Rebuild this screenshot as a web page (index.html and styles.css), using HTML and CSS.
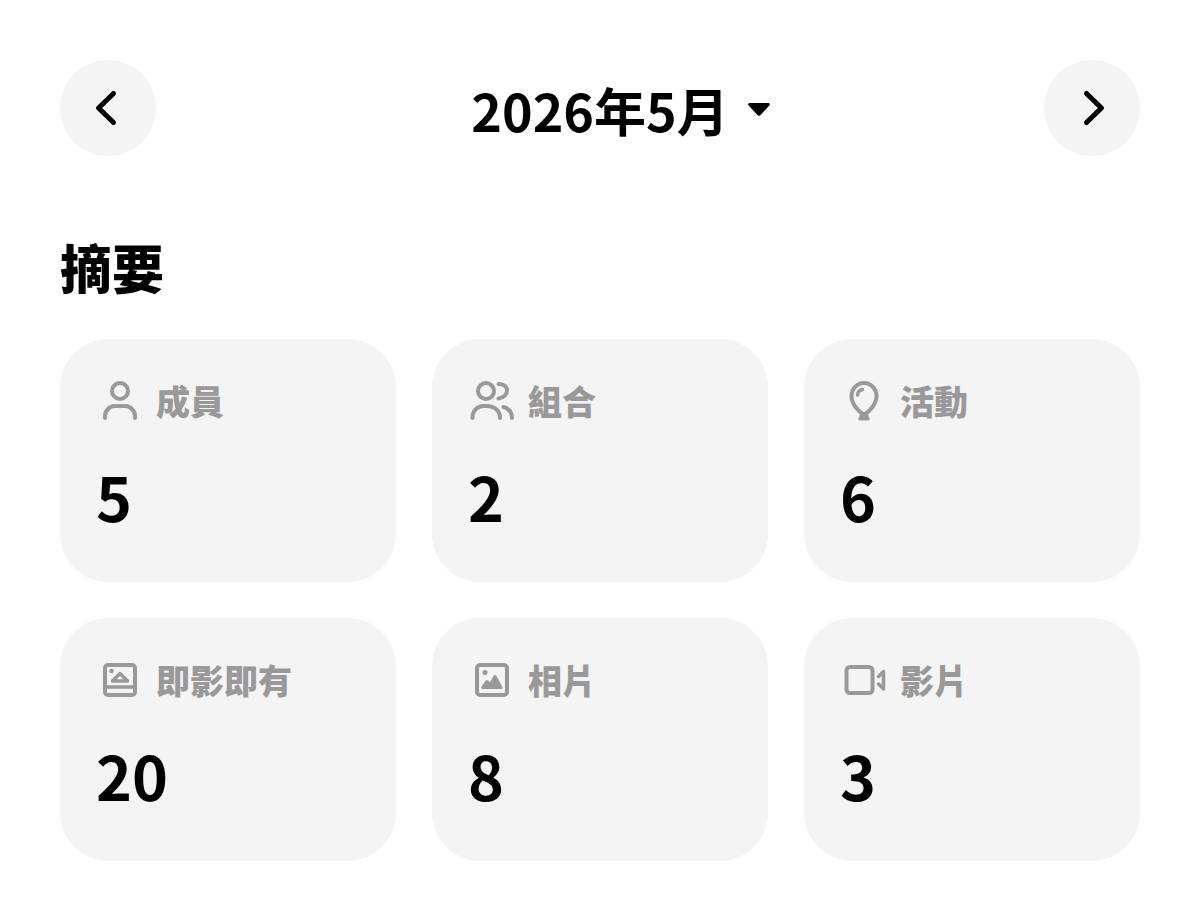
FILE: index.html
```html
<!DOCTYPE html>
<html lang="zh-Hant">
<head>
<meta charset="utf-8">
<meta name="viewport" content="width=device-width, initial-scale=1">
<title>摘要</title>
<link rel="stylesheet" href="styles.css">
</head>
<body>
<main class="page">
  <header class="month-bar">
    <button class="round-button" type="button" aria-label="上個月">
      <svg class="icon" viewBox="0 0 48 48" aria-hidden="true"><path d="M29.500 9.500 14.500 24l15 14.500" class="chevron"/></svg>
    </button>
    <button class="month-picker" type="button">
      <span>2026年5月</span>
      <svg class="caret" viewBox="0 0 24 16" aria-hidden="true"><path d="M2.500 1h19q2.300.5.8 2.500l-8.400 9.300q-1.900 1.900-3.800 0L1.700 3.500Q.2 1.500 2.500 1Z"/></svg>
    </button>
    <button class="round-button" type="button" aria-label="下個月">
      <svg class="icon" viewBox="0 0 48 48" aria-hidden="true"><path d="M18.500 9.500 33.500 24l-15 14.500" class="chevron"/></svg>
    </button>
  </header>

  <section class="summary">
    <h1 class="heading">摘要</h1>
    <dl class="cards">
      <div class="card">
        <dt class="label">
          <svg class="icon" viewBox="0 0 48 48" aria-hidden="true"><circle cx="24" cy="14" r="8"/><path d="M9 41v-1.500c0-6 4.500-10.500 10-10.500h10c5.500 0 10 4.500 10 10.500v1.500"/></svg>
          成員
        </dt>
        <dd class="value">5</dd>
      </div>
      <div class="card">
        <dt class="label">
          <svg class="icon" viewBox="0 0 48 48" aria-hidden="true"><circle cx="18" cy="14" r="8"/><path d="M4.500 41v-.5C4.500 33.500 9.500 29 15.500 29h3c8 0 13.500 5 13.500 11.500v.5M30.500 7c5 0 8.500 2.500 8.500 6.500s-3.500 7.500-8.500 8M35.500 30c5 1.500 8.500 5.500 8.500 11"/></svg>
          組合
        </dt>
        <dd class="value">2</dd>
      </div>
      <div class="card">
        <dt class="label">
          <svg class="icon" viewBox="0 0 48 48" aria-hidden="true"><path d="M24 37.500c-4.500-2-12.500-10-12.500-18.500a12.500 13 0 0 1 25 0c0 8.500-8 16.500-12.500 18.500Z"/><path d="M17.500 18c.3-3 2.200-5 5-5.500" class="thin"/><path d="M21 36h6l2.500 5q.5 2.500-2 2.500h-7q-2.500 0-2-2.500Z" class="solid"/></svg>
          活動
        </dt>
        <dd class="value">6</dd>
      </div>
      <div class="card">
        <dt class="label">
          <svg class="icon" viewBox="0 0 48 48" aria-hidden="true"><rect x="9" y="9" width="30" height="30" rx="3"/><path d="M9 31h30M16.500 25l7.500-7.500 7.500 7.500Z" class="thin"/><circle cx="15.500" cy="15" r="2.300" class="solid"/></svg>
          即影即有
        </dt>
        <dd class="value">20</dd>
      </div>
      <div class="card">
        <dt class="label">
          <svg class="icon" viewBox="0 0 48 48" aria-hidden="true"><rect x="9" y="9" width="30" height="30" rx="3"/><circle cx="17" cy="16.500" r="2.500" class="solid"/><path d="M15 33q-2.500-.2-1.500-2.200l4-6q1.500-1.500 3 0l1.500 1.700 3.500-6.500q1.500-1.800 3 0l6 11q.6 1.800-1.200 2Z" class="solid"/></svg>
          相片
        </dt>
        <dd class="value">8</dd>
      </div>
      <div class="card">
        <dt class="label">
          <svg class="icon" viewBox="0 0 48 48" aria-hidden="true"><rect x="6.500" y="11" width="26" height="26" rx="3.500"/><path d="M38.500 20.500l5-5v17.500l-5-5" class="thin"/></svg>
          影片
        </dt>
        <dd class="value">3</dd>
      </div>
    </dl>
  </section>
</main>
</body>
</html>
```
FILE: styles.css
```css
* {
  box-sizing: border-box;
}

body {
  margin: 0;
  background: #fff;
  color: #000;
  font-family: "Noto Sans CJK TC", "Noto Sans", sans-serif;
  font-weight: 700;
}

.page {
  padding: 60px;
}

.month-bar {
  display: flex;
  align-items: center;
  justify-content: space-between;
}

button {
  padding: 0;
  border: 0;
  color: inherit;
  font: inherit;
  cursor: pointer;
}

.round-button {
  display: grid;
  place-items: center;
  width: 96px;
  height: 96px;
  border-radius: 50%;
  background: #f4f4f4;
}

.month-picker {
  display: flex;
  align-items: center;
  gap: 18px;
  padding: 4px 0 0 42px;
  background: none;
  font-size: 52px;
  line-height: 76px;
}

.caret {
  width: 24px;
  height: 16px;
  fill: currentColor;
}

.icon {
  flex: none;
  width: 48px;
  height: 48px;
  fill: none;
  stroke: currentColor;
  stroke-width: 4;
  stroke-linecap: round;
  stroke-linejoin: round;
}

.icon .chevron {
  stroke-width: 5;
}

.icon .thin {
  stroke-width: 3.5;
}

.icon .solid {
  fill: currentColor;
  stroke: none;
}

.summary {
  padding-top: 73px;
}

.heading {
  margin: 0;
  font-size: 52px;
  font-weight: 900;
  line-height: 76px;
}

.cards {
  display: grid;
  grid-template-columns: repeat(3, 1fr);
  gap: 36px;
  margin: 34px 0 0;
}

.card {
  padding: 36px 36px 42px;
  border-radius: 48px;
  background: #f4f4f4;
}

.label {
  display: flex;
  align-items: center;
  gap: 12px;
  color: #999;
  font-size: 34px;
  font-weight: 900;
  line-height: 51px;
}

.value {
  margin: 26px 0 0;
  font-size: 61px;
  line-height: 88px;
}
```
